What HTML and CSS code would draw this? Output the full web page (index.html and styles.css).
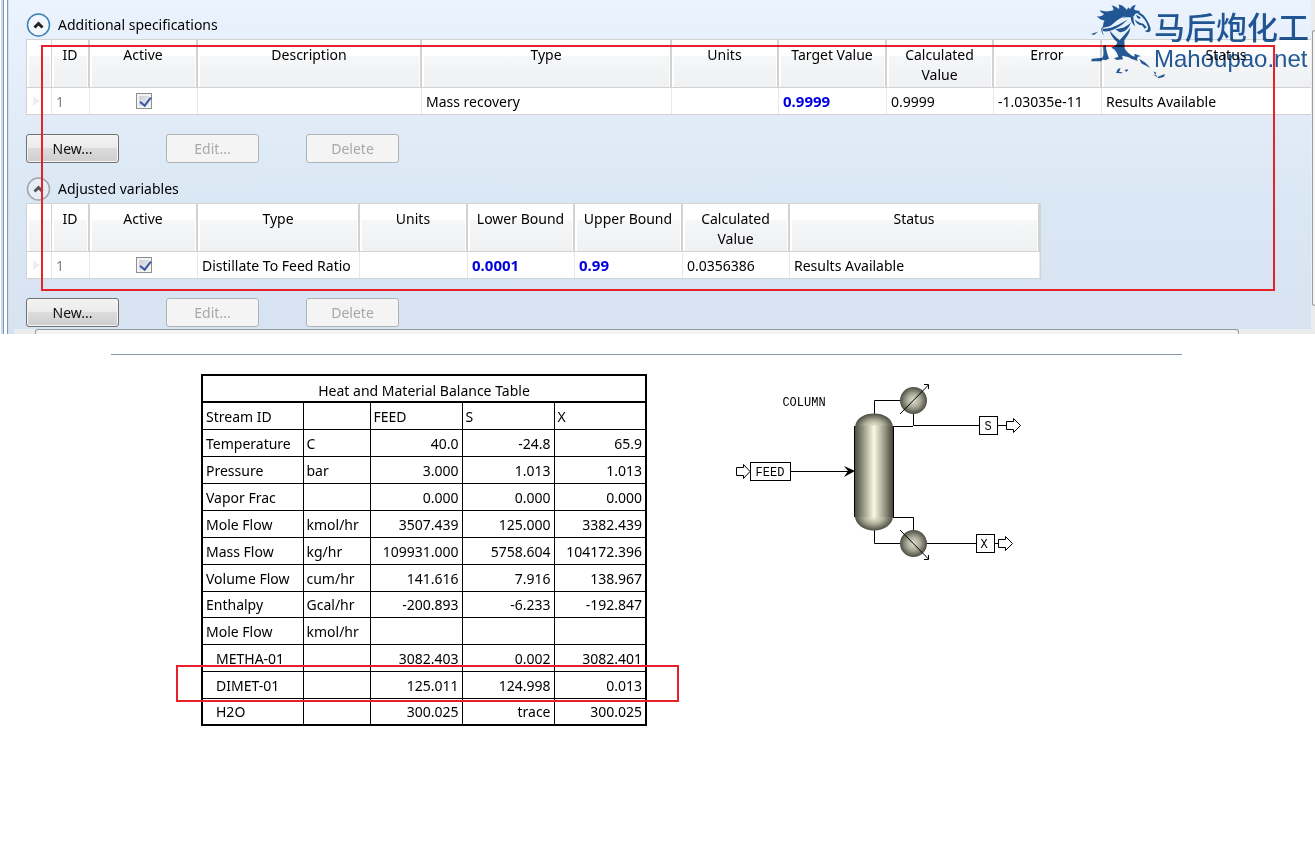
FILE: index.html
```html
<!DOCTYPE html>
<html lang="en">
<head>
<meta charset="utf-8">
<title>Column specifications and stream results</title>
<link rel="stylesheet" href="styles.css">
</head>
<body>
<section class="panel">
  <div class="frame"></div>
  <div class="content">
    <section class="group">
      <div class="group-head">
        <button class="toggle toggle-active" type="button" aria-label="Collapse additional specifications">
          <svg viewBox="0 0 24 24"><circle cx="12" cy="12" r="11"/><path d="M8 14.5 L12 10.5 L16 14.5"/></svg>
        </button>
        <h2>Additional specifications</h2>
      </div>
      <div class="grid-wrap">
        <table class="grid grid-specs">
          <colgroup><col class="c-mark"><col class="c-id"><col class="c-wide"><col class="c-desc"><col class="c-status"><col class="c-num"><col class="c-wide"><col class="c-num"><col class="c-wide"><col class="c-status"></colgroup>
          <thead><tr><th></th><th>ID</th><th>Active</th><th>Description</th><th>Type</th><th>Units</th><th>Target Value</th><th>Calculated Value</th><th>Error</th><th>Status</th></tr></thead>
          <tbody><tr><td class="mark"><i class="arrow"></i></td><td class="id">1</td><td class="tick"><input type="checkbox" checked aria-label="Specification 1 active"></td><td></td><td>Mass recovery</td><td></td><td class="entry">0.9999</td><td>0.9999</td><td>-1.03035e-11</td><td>Results Available</td></tr></tbody>
        </table>
      </div>
      <div class="actions">
        <button type="button">New...</button><button type="button" disabled>Edit...</button><button type="button" disabled>Delete</button>
      </div>
    </section>
    <section class="group">
      <div class="group-head">
        <button class="toggle" type="button" aria-label="Collapse adjusted variables">
          <svg viewBox="0 0 24 24"><circle cx="12" cy="12" r="11"/><path d="M8 14.5 L12 10.5 L16 14.5"/></svg>
        </button>
        <h2>Adjusted variables</h2>
      </div>
      <div class="grid-wrap grid-closed">
        <table class="grid grid-vars">
          <colgroup><col class="c-mark"><col class="c-id"><col class="c-wide"><col class="c-type"><col class="c-wide"><col class="c-num"><col class="c-wide"><col class="c-num"><col class="c-status"></colgroup>
          <thead><tr><th></th><th>ID</th><th>Active</th><th>Type</th><th>Units</th><th>Lower Bound</th><th>Upper Bound</th><th>Calculated Value</th><th>Status</th></tr></thead>
          <tbody><tr><td class="mark"><i class="arrow"></i></td><td class="id">1</td><td class="tick"><input type="checkbox" checked aria-label="Variable 1 active"></td><td>Distillate To Feed Ratio</td><td></td><td class="entry">0.0001</td><td class="entry">0.99</td><td>0.0356386</td><td>Results Available</td></tr></tbody>
        </table>
      </div>
      <div class="actions">
        <button type="button">New...</button><button type="button" disabled>Edit...</button><button type="button" disabled>Delete</button>
      </div>
    </section>
  </div>
  <div class="vscroll"><div class="vthumb"></div></div>
  <div class="hscroll"><div class="hthumb"></div></div>
  <div class="callout callout-panel"></div>
  <div class="logo">
    <svg class="horse" viewBox="0 0 240 252" fill="#245a96">
      <path d="M48 84 C54 76 50 68 56 62 C46 61 38 56 33 49 C44 50 50 48 54 42 C48 40 44 36 41 31 C56 36 70 35 82 31 C83 25 80 20 76 16 C88 18 94 24 98 27 C101 22 100 18 97 14 C110 14 116 22 123 30 L126 22 L138 32 C132 40 122 46 112 50 C98 56 86 66 76 76 C66 82 56 82 48 84 Z"/>
      <path d="M130 32 C134 20 142 14 150 16 C144 22 144 27 146 30 L161 33 L160 40 C150 38 146 42 144 48 L134 52 C126 52 116 52 108 54 C118 48 126 40 130 32 Z"/>
      <path d="M158 36 C170 42 178 50 184 62 C190 72 195 84 194 90 C191 98 183 98 176 93 C183 92 188 88 186 82 C184 68 172 50 156 42 Z M134 50 L142 48 C142 60 144 70 148 79 C139 72 134 62 134 50 Z M146 58 C154 66 164 70 172 71 L182 82 L176 86 L168 76 C158 76 150 70 146 58 Z M150 44 L164 52 L161 57 L154 54 Z"/>
      <path d="M50 86 C72 88 96 76 126 58 C104 82 74 97 52 94 Z"/>
      <path d="M88 88 L112 83 C120 79 130 74 136 66 L128 82 C118 95 108 98 100 96 Z"/>
      <path d="M70 90 C77 99 88 111 101 121 C111 108 124 96 133 83 C132 97 124 109 115 120 L116 145 C122 157 135 167 149 172 L156 183 L137 177 C126 169 119 170 108 167 L111 178 L92 180 L84 174 L97 171 C94 158 88 148 76 143 C86 138 91 137 94 127 C82 117 74 105 70 90 Z"/>
      <path d="M50 82 C48 92 50 100 54 107 C48 101 45 92 46 84 Z M15 102 L36 95 L24 105 Z M52 137 L59 135 C61 153 64 163 69 176 L60 180 L50 179 L45 184 L15 184 L18 176 L49 173 C56 162 50 149 52 137 Z"/>
      <path d="M145 161 L166 169 C156 168 154 170 153 180 L146 172 Z M160 177 C172 184 184 190 192 204 C183 197 171 194 166 190 Z M96 206 L104 205 L99 216 L109 217 L108 220 L90 219 Z M115 210 L127 208 L122 216 Z M202 214 L211 218 L208 224 Z M202 224 L210 225 L214 231 L237 222 L234 230 L219 235 Z"/>
    </svg>
    <div class="logo-words"><span class="logo-cn" lang="zh">马后炮化工</span><span class="logo-url">Mahoupao.net</span></div>
  </div>
</section>

<hr class="divider">

<main class="report">
  <div class="balance-wrap">
    <table class="balance">
      <colgroup><col class="b-name"><col class="b-unit"><col class="b-val"><col class="b-val"><col class="b-val"></colgroup>
      <thead>
        <tr class="title"><th colspan="5">Heat and Material Balance Table</th></tr>
        <tr><th>Stream ID</th><th></th><th>FEED</th><th>S</th><th>X</th></tr>
      </thead>
      <tbody>
        <tr><td>Temperature</td><td>C</td><td>40.0</td><td>-24.8</td><td>65.9</td></tr>
        <tr><td>Pressure</td><td>bar</td><td>3.000</td><td>1.013</td><td>1.013</td></tr>
        <tr><td>Vapor Frac</td><td></td><td>0.000</td><td>0.000</td><td>0.000</td></tr>
        <tr><td>Mole Flow</td><td>kmol/hr</td><td>3507.439</td><td>125.000</td><td>3382.439</td></tr>
        <tr><td>Mass Flow</td><td>kg/hr</td><td>109931.000</td><td>5758.604</td><td>104172.396</td></tr>
        <tr><td>Volume Flow</td><td>cum/hr</td><td>141.616</td><td>7.916</td><td>138.967</td></tr>
        <tr class="short"><td>Enthalpy</td><td>Gcal/hr</td><td>-200.893</td><td>-6.233</td><td>-192.847</td></tr>
        <tr><td>Mole Flow</td><td>kmol/hr</td><td></td><td></td><td></td></tr>
        <tr class="part"><td>METHA-01</td><td></td><td>3082.403</td><td>0.002</td><td>3082.401</td></tr>
        <tr class="part"><td>DIMET-01</td><td></td><td>125.011</td><td>124.998</td><td>0.013</td></tr>
        <tr class="part"><td>H2O</td><td></td><td>300.025</td><td>trace</td><td>300.025</td></tr>
      </tbody>
    </table>
    <div class="callout callout-row"></div>
  </div>
  <svg class="flowsheet" width="300" height="185" viewBox="730 380 300 185" role="img" aria-label="Column flowsheet">
    <defs>
      <linearGradient id="shell"><stop offset="0" stop-color="#45453c"/><stop offset=".2" stop-color="#8a8a78"/><stop offset=".5" stop-color="#fbfbe4"/><stop offset=".8" stop-color="#8a8a78"/><stop offset="1" stop-color="#383830"/></linearGradient>
      <radialGradient id="ball"><stop offset="0" stop-color="#dedecb"/><stop offset=".5" stop-color="#a9a998"/><stop offset="1" stop-color="#4c4c42"/></radialGradient>
      <radialGradient id="dome-top" cx=".5" cy="1" r="1" gradientTransform="translate(.25 0) scale(.5 1)"><stop offset="0" stop-color="#f4f4dc"/><stop offset=".5" stop-color="#b0b09c"/><stop offset="1" stop-color="#4c4c42"/></radialGradient>
      <radialGradient id="dome-bottom" cx=".5" cy="0" r="1" gradientTransform="translate(.25 0) scale(.5 1)"><stop offset="0" stop-color="#f4f4dc"/><stop offset=".5" stop-color="#b0b09c"/><stop offset="1" stop-color="#4c4c42"/></radialGradient>
    </defs>
    <g class="pipe">
      <path d="M874.5 414 V400.5 H901 M913.5 412 V425.5 M893 426.5 H913 M913.5 425.5 H979 M997 425.5 H1006"/>
      <path d="M791 471.5 H852 M874.5 530 V543.5 H901 M893 517.5 H913.5 V531 M926 543.5 H976 M994 543.5 H998"/>
    </g>
    <path d="M844 466 L855 471 L844 477 L848 471 Z"/>
    <path d="M855 427 C856 418 864 413.500 874 413.500 S892 418 893 427 Z" fill="url(#dome-top)"/>
    <path d="M855 517 C856 525 864 530.500 874 530.500 S892 525 893 517 Z" fill="url(#dome-bottom)"/>
    <path d="M854 426 H894 V517 H854 Z" fill="url(#shell)"/>
    <path class="pipe" d="M854.500 426 V517 M893.500 426 V517"/>
    <circle cx="913.500" cy="400.500" r="13.500" fill="url(#ball)"/>
    <circle cx="913.500" cy="543.500" r="13.500" fill="url(#ball)"/>
    <path class="pipe" d="M900 414 L928.500 385 M924 384.500 H928.500 V389 M900 530 L928.500 559 M924 559.500 H928.500 V555"/>
    <g class="tag">
      <rect x="750.500" y="462.500" width="40" height="18"/><rect x="979.500" y="416.500" width="18" height="18"/><rect x="976.500" y="534.500" width="18" height="18"/>
      <path d="M736.500 467.500 H743.500 V464.500 L750 471.500 L743.500 478.500 V475.500 H736.500 Z"/>
      <path d="M1006.500 421.500 H1013.500 V418.500 L1020.500 425.500 L1013.500 432.500 V429.500 H1006.500 Z"/>
      <path d="M998.500 539.500 H1005.500 V536.500 L1012.500 543.500 L1005.500 550.500 V547.500 H998.500 Z"/>
    </g>
    <g class="label"><text x="804" y="406">COLUMN</text><text x="770" y="476">FEED</text><text x="988" y="430">S</text><text x="984" y="548">X</text></g>
  </svg>
</main>
</body>
</html>
```
FILE: styles.css
```css
* { box-sizing: border-box; }
body {
  margin: 0;
  background: #fff;
  color: #000;
  font: 14px/20px "Noto Sans", "Liberation Sans", sans-serif;
}
button, input { font: inherit; }
table { border-spacing: 0; table-layout: fixed; }

.panel {
  position: relative;
  display: grid;
  grid-template-columns: 9px minmax(0, 1fr) 4px;
  overflow: hidden;
}
.frame {
  grid-row: 1 / 3;
  background: linear-gradient(90deg, #fff 0 1px, #c5daee 1px 3px, #8297ae 3px 4px, #fff 4px 7px, #7f98b5 7px 8px, #cfdfef 8px);
}
.content {
  padding: 12px 0 2px 17px;
  background: linear-gradient(#ebf3fd, #dae7f4 60%, #d7e3f1);
}
.group + .group { margin-top: 13px; }
.group-head { display: flex; align-items: center; gap: 7px; height: 26px; margin-bottom: 1px; }
.group-head h2 { margin: 0; font-size: 14px; font-weight: 400; }
.toggle { width: 25px; height: 24px; padding: 0; border: 0; background: none; }
.toggle svg { display: block; width: 25px; height: 24px; fill: #e6eef7; stroke: #a2a5a9; }
.toggle circle { stroke-width: 1.5; }
.toggle path { fill: none; stroke: #555; stroke-width: 3; }
.toggle-active svg { fill: #f1f7fd; stroke: #3c82b4; }
.toggle-active path { stroke: #222; }

.grid-wrap { overflow: hidden; height: 76px; border: solid #d2d2d2; border-width: 1px 0 1px 1px; background: #fff; }
.grid-closed { width: 1015px; border-right-width: 1px; }
.grid-specs { width: 1325px; }
.grid-vars { width: 1013px; }
.c-mark { width: 25px; }
.c-id { width: 38px; }
.c-wide { width: 108px; }
.c-num { width: 107px; }
.c-desc { width: 224px; }
.c-type { width: 162px; }
.c-status { width: 250px; }
.grid th {
  height: 48px;
  padding: 5px 6px 0;
  vertical-align: top;
  font-weight: 400;
  border-right: 2px solid #d2d2d2;
  border-bottom: 1px solid #d2d2d2;
  background: linear-gradient(#fff 0 34%, #f6f7f9 34%, #eff0f2);
  box-shadow: inset 2px 0 #fff, inset -1px 0 #fff;
}
.grid th:first-child { border-right-width: 1px; }
.grid td { height: 26px; padding: 2px 0 0 4px; border-right: 1px solid #e8e8e8; white-space: nowrap; }
.grid .mark { padding: 0 0 0 6px; }
.grid .id { color: #808080; }
.grid .tick { padding: 0; }
.grid .entry { padding-top: 0; color: #0000e0; font-size: 15px; font-weight: 700; }
.arrow { display: block; width: 0; border: solid transparent; border-width: 5px 0 5px 7px; border-left-color: #ededed; }
.tick input {
  appearance: none;
  display: block;
  position: relative;
  width: 16px;
  height: 16px;
  margin: 0 auto;
  border: 1px solid #8e8f8f;
  box-shadow: inset 0 0 0 2px #f4f4f4;
  background: linear-gradient(135deg, #c4cad4, #f2f3f5);
}
.tick input:checked::after {
  content: "";
  position: absolute;
  left: 5px;
  top: 1px;
  width: 5px;
  height: 9px;
  border: solid #3d57a0;
  border-width: 0 2px 2px 0;
  transform: rotate(38deg);
}

.actions { display: flex; gap: 47px; margin-top: 19px; }
.actions button {
  width: 93px;
  height: 29px;
  padding: 0;
  border: 1px solid #707070;
  border-radius: 3px;
  color: #111;
  background: linear-gradient(#f3f3f3, #ebebeb 48%, #dcdcdc 50%, #cdcdcd);
  box-shadow: inset 0 0 0 1px #f6f6f6;
}
.actions button:disabled { color: #a8a8a8; border-color: #adb2b5; background: #f4f4f4; }

.vscroll { grid-row: 1 / 3; background: #ececec; }
.vthumb { height: 276px; margin: 30px 0 0 1px; border: solid #999; border-width: 1px 0 1px 1px; border-radius: 3px 0 0 3px; background: #f6f6f6; }
.hscroll { grid-column: 2; grid-row: 2; height: 5px; padding: 0 72px 0 26px; background: linear-gradient(90deg, #d7e3f1 5px, #ececec 5px); }
.hthumb { height: 5px; border: solid #999; border-width: 1px 1px 0; border-radius: 3px 3px 0 0; background: #f3f3f3; }

.callout { position: absolute; border: 2px solid #e8202a; pointer-events: none; }
.callout-panel { left: 41px; right: 40px; top: 45px; height: 246px; }
.callout-row { left: -25px; right: -32px; top: 291px; height: 37px; }

.logo { position: absolute; top: 0; right: 6px; display: flex; color: #245a96; mix-blend-mode: multiply; }
.horse { width: 80px; height: 84px; margin-right: -12px; }
.logo-words { display: flex; flex-direction: column; padding-top: 9px; }
.logo-cn { font: 500 31px/34px "Noto Sans CJK SC", sans-serif; }
.logo-url { font: 24px/32px "Liberation Sans", sans-serif; }

.divider { height: 1px; margin: 20px 133px 19px 111px; border: 0; background: #8796a8; }
.report { display: flex; align-items: flex-start; gap: 83px; padding-left: 201px; }
.balance-wrap { position: relative; }
.balance { width: 446px; border-collapse: collapse; border: 2px solid #000; }
.b-name { width: 101px; }
.b-unit { width: 67px; }
.b-val { width: 92px; }
.balance th, .balance td { height: 27px; padding: 2px 3px 0; border: 1px solid #000; font-weight: 400; text-align: left; white-space: nowrap; }
.balance .title th { height: 27px; padding-top: 4px; border-bottom-width: 2px; text-align: center; }
.balance .short td { height: 26px; }
.balance td:nth-child(n+3) { text-align: right; }
.balance .part td:first-child { padding-left: 13px; }

.flowsheet { flex: none; margin-top: 6px; }
.pipe { fill: none; stroke: #000; stroke-width: 1; }
.tag { fill: #fff; stroke: #000; stroke-width: 1; }
.label { font: 12px "Liberation Mono", monospace; text-anchor: middle; }
```
